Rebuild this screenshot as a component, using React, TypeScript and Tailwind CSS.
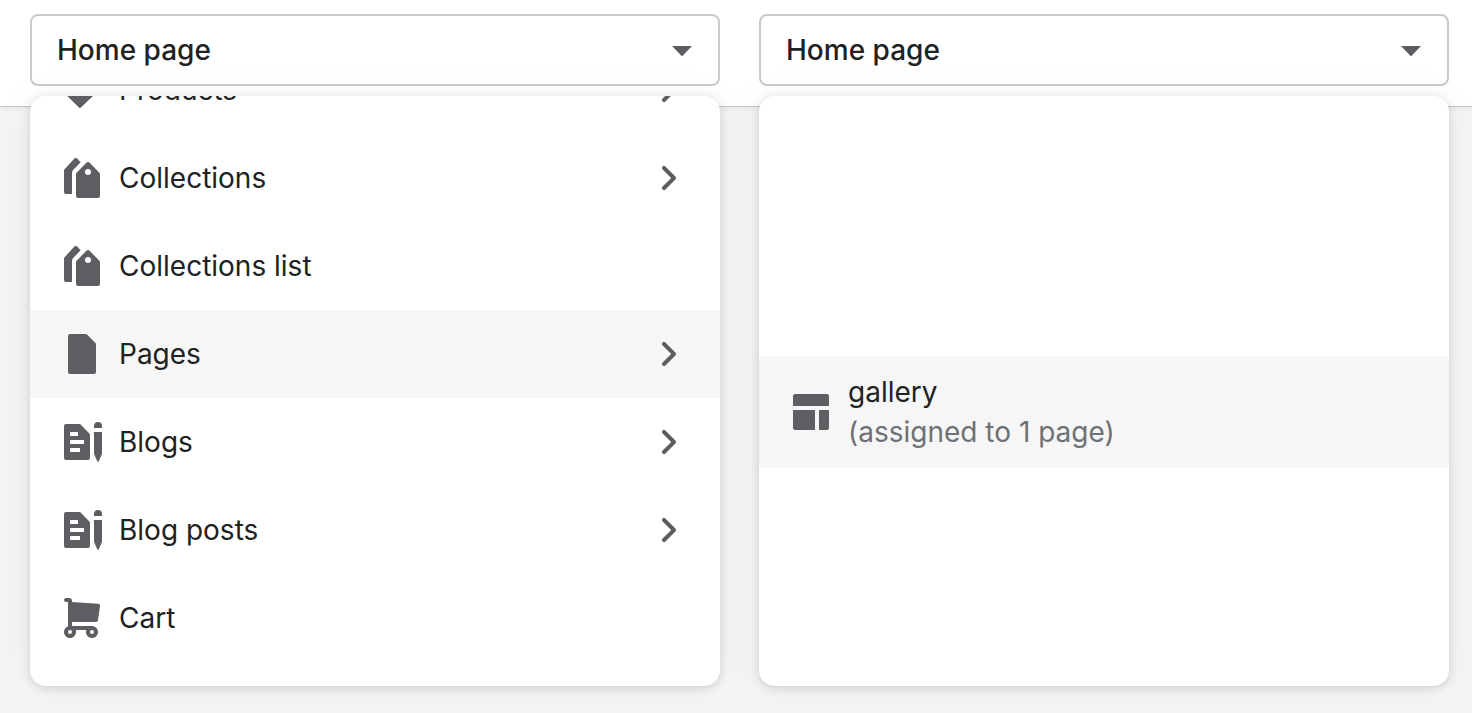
import type { ReactNode } from "react";

type MenuItem = {
  label: string;
  icon: ReactNode;
  hasChildren?: boolean;
  active?: boolean;
};

function Icon({ children }: { children: ReactNode }) {
  return (
    <svg viewBox="0 0 20 20" className="size-10 shrink-0 fill-[#5c5e62]" aria-hidden="true">
      {children}
    </svg>
  );
}

function ProductsIcon() {
  return (
    <Icon>
      <path d="M2 1h7.6a2 2 0 0 1 1.4.6l6.6 6.6a2 2 0 0 1 0 2.8l-8.3 7.9a.5.5 0 0 1-.7 0L1.4 11.8A2 2 0 0 1 1 10.6V2a1 1 0 0 1 1-1z" />
    </Icon>
  );
}

function CollectionsIcon() {
  return (
    <Icon>
      <path d="M6.2.3a1 1 0 0 1 1.4 0l1.7 1.8-3.7 3.9A2 2 0 0 0 5 7.4V18H2a1 1 0 0 1-1-1V6.3a1 1 0 0 1 .3-.7z" />
      <path
        fillRule="evenodd"
        d="M12.3 2.3a1 1 0 0 1 1.4 0l5 5.1a1 1 0 0 1 .3.7V19a1 1 0 0 1-1 1H8a1 1 0 0 1-1-1V8.1a1 1 0 0 1 .3-.7zM13 8.5a1.5 1.5 0 1 0 0-3 1.5 1.5 0 0 0 0 3z"
      />
    </Icon>
  );
}

function PageIcon() {
  return (
    <Icon>
      <path d="M4 0h7.8a1 1 0 0 1 .7.3l4.2 4.2a1 1 0 0 1 .3.7V19a1 1 0 0 1-1 1H4a1 1 0 0 1-1-1V1a1 1 0 0 1 1-1z" />
    </Icon>
  );
}

function BlogIcon() {
  return (
    <Icon>
      <path
        fillRule="evenodd"
        d="M2 1h6.6a1 1 0 0 1 .7.3l4.4 4.4a1 1 0 0 1 .3.7V18a1 1 0 0 1-1 1H2a1 1 0 0 1-1-1V2a1 1 0 0 1 1-1zm2 4v2h4V5zm0 4v2h7V9zm0 4v2h5v-2z"
      />
      <path d="M18 0a2 2 0 0 0-2 2v1h4V2a2 2 0 0 0-2-2zM16 5h4v11l-1.7 3.8a.35.35 0 0 1-.6 0L16 16z" />
    </Icon>
  );
}

function CartIcon() {
  return (
    <Icon>
      <path
        fillRule="evenodd"
        d="M1 1a1 1 0 0 1 1-1h1.5A1.5 1.5 0 0 1 5 1.5V2l13 .9a1 1 0 0 1 1 1.1l-1 7.1a1 1 0 0 1-1 .9H5v2h10a3 3 0 1 1-2.83 2H6.83A3 3 0 1 1 3 14.17V2H2a1 1 0 0 1-1-1zm3 17a1 1 0 1 0 0-2 1 1 0 0 0 0 2zm11 0a1 1 0 1 0 0-2 1 1 0 0 0 0 2z"
      />
    </Icon>
  );
}

function TemplateIcon() {
  return (
    <Icon>
      <path d="M2 1h16a1 1 0 0 1 1 1v5H1V2a1 1 0 0 1 1-1zM1 9h11v10H2a1 1 0 0 1-1-1zM14 9h5v9a1 1 0 0 1-1 1h-4z" />
    </Icon>
  );
}

function ChevronIcon() {
  return (
    <Icon>
      <path d="M8 16a1 1 0 0 1-.707-1.707L11.586 10 7.293 5.707a1 1 0 1 1 1.414-1.414l5 5a1 1 0 0 1 0 1.414l-5 5A1 1 0 0 1 8 16z" />
    </Icon>
  );
}

const items: MenuItem[] = [
  { label: "Products", icon: <ProductsIcon />, hasChildren: true },
  { label: "Collections", icon: <CollectionsIcon />, hasChildren: true },
  { label: "Collections list", icon: <CollectionsIcon /> },
  { label: "Pages", icon: <PageIcon />, hasChildren: true, active: true },
  { label: "Blogs", icon: <BlogIcon />, hasChildren: true },
  { label: "Blog posts", icon: <BlogIcon />, hasChildren: true },
  { label: "Cart", icon: <CartIcon /> },
];

function TemplatePicker({ children }: { children: ReactNode }) {
  return (
    <div className="relative">
      <button
        type="button"
        aria-haspopup="menu"
        aria-expanded="true"
        className="flex h-18 w-full items-center justify-between rounded-lg border-2 border-[#c9cacf] bg-white pr-4 pl-[25px] text-left font-medium"
      >
        Home page
        <Icon>
          <path d="M5 8h10l-4.7 4.9a.4.4 0 0 1-.6 0z" />
        </Icon>
      </button>
      {/* Popover */}
      <div className="absolute top-full mt-[10px] w-full overflow-hidden rounded-2xl bg-white shadow-[-2px_0_40px_rgba(23,24,24,0.05),0_2px_10px_rgba(23,24,24,0.15)]">
        {children}
      </div>
    </div>
  );
}

export default function App() {
  return (
    <div className="min-h-screen bg-[#f5f5f5] font-['Inter',sans-serif] text-[28px] leading-10 text-[#202223]">
      <header className="grid grid-cols-2 gap-[39px] border-b border-[#c8c8c8] bg-white pt-[14px] pr-[23px] pb-5 pl-[30px] shadow-[0_2px_4px_rgba(0,0,0,0.06)]">
        {/* Template types, scrolled to the end of the list */}
        <TemplatePicker>
          <ul className="flex h-[590px] flex-col justify-end pb-6">
            {items.map((item) => (
              <li key={item.label} className="shrink-0">
                <button
                  type="button"
                  className={`flex h-22 w-full items-center gap-[17px] px-8 text-left ${item.active ? "bg-[#f6f6f6]" : ""}`}
                >
                  {item.icon}
                  <span className="grow">{item.label}</span>
                  {item.hasChildren && <ChevronIcon />}
                </button>
              </li>
            ))}
          </ul>
        </TemplatePicker>

        {/* Page templates */}
        <TemplatePicker>
          <ul className="pt-[260px] pb-[218px]">
            <li>
              <button type="button" className="flex w-full items-center gap-[17px] bg-[#f6f6f6] px-8 py-4 text-left">
                <TemplateIcon />
                <span className="flex flex-col">
                  <span>gallery</span>
                  <span className="text-[#6d7175]">(assigned to 1 page)</span>
                </span>
              </button>
            </li>
          </ul>
        </TemplatePicker>
      </header>
    </div>
  );
}
